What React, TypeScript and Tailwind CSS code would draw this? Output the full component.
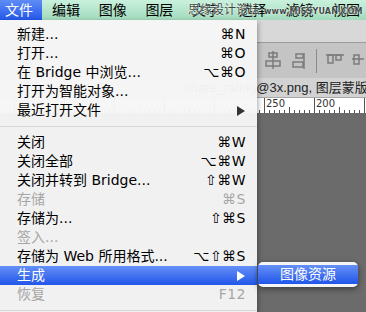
import { FC } from 'react';
import clsx from 'clsx';

type Item =
  | { sep: true }
  | {
      sep?: false;
      label: string;
      shortcut?: string;
      arrow?: boolean;
      disabled?: boolean;
      active?: boolean;
    };

const items: Item[] = [
  { label: '新建...', shortcut: '⌘N' },
  { label: '打开...', shortcut: '⌘O' },
  { label: '在 Bridge 中浏览...', shortcut: '⌥⌘O' },
  { label: '打开为智能对象...' },
  { label: '最近打开文件', arrow: true },
  { sep: true },
  { label: '关闭', shortcut: '⌘W' },
  { label: '关闭全部', shortcut: '⌥⌘W' },
  { label: '关闭并转到 Bridge...', shortcut: '⇧⌘W' },
  { label: '存储', shortcut: '⌘S', disabled: true },
  { label: '存储为...', shortcut: '⇧⌘S' },
  { label: '签入...', disabled: true },
  { label: '存储为 Web 所用格式...', shortcut: '⌥⇧⌘S' },
  { label: '生成', arrow: true, active: true },
  { label: '恢复', shortcut: 'F12', disabled: true },
  { sep: true },
];

const menuBar = ['编辑', '图像', '图层', '文字', '选择', '滤镜', '视图'];

const Arrow: FC<{ className?: string }> = ({ className }) => (
  <svg width="8" height="10" viewBox="0 0 8 10" className={className}>
    <path d="M0 0 L8 5 L0 10 Z" fill="currentColor" />
  </svg>
);

const Ruler: FC = () => {
  const ticks = [];
  for (let x = 4; x <= 366; x += 5) {
    const off = (x - 264 + 500) % 50;
    const h = off === 0 ? 15 : off === 25 ? 6 : 3;
    ticks.push(<line key={x} x1={x + 0.5} x2={x + 0.5} y1={15 - h} y2={15} stroke="#555" />);
  }
  return (
    <svg width="366" height="15" className="block">
      {ticks}
    </svg>
  );
};

const AlignIcons: FC = () => (
  <svg width="110" height="34" viewBox="0 0 110 34" className="block">
    <g fill="none" stroke="#7b7b7b" strokeWidth="1.5">
      <line x1="19" y1="7" x2="19" y2="25" />
      <rect x="15" y="9" width="8" height="4" />
      <rect x="12" y="17" width="14" height="5" />
      <line x1="50" y1="9" x2="50" y2="25" />
      <rect x="42" y="10" width="7" height="4" />
      <rect x="39" y="18" width="10" height="5" />
    </g>
    <line x1="62.5" y1="5" x2="62.5" y2="29" stroke="#8a8a8a" />
    <g fill="none" stroke="#7b7b7b" strokeWidth="1.5">
      <line x1="72" y1="11" x2="90" y2="11" />
      <rect x="74" y="11" width="5" height="8" />
      <rect x="82" y="11" width="5" height="5" />
      <line x1="98" y1="15" x2="110" y2="15" />
      <rect x="100" y="11" width="5" height="9" />
    </g>
  </svg>
);

export default function App() {
  return (
    <div className="relative h-[312px] w-[366px] overflow-hidden bg-[#6b6b6b] font-['DejaVu_Sans','Noto_Sans_CJK_SC',sans-serif] text-[14px] text-black">
      {/* menu bar */}
      <div className="flex h-[20px] items-center bg-[linear-gradient(#c9f1dd,#a2dabd)] leading-[20px]">
        <div className="h-full w-[42px] bg-[linear-gradient(#5f8df6,#2457ea)] pl-[5px] text-white">文件</div>
        <div className="flex gap-[18.7px] pl-[10px]">
          {menuBar.map((m) => (
            <span key={m} className="w-[28px]">
              {m}
            </span>
          ))}
        </div>
      </div>

      {/* app window behind the menu */}
      <div className="flex flex-col">
        <div className="h-[23px] border-b border-[#9c9c9c] bg-[#d8d8d8]" />
        <div className="flex h-[35px] items-center bg-[#c4c4c4] pl-[254px]">
          <AlignIcons />
        </div>
        <div className="h-[20px] overflow-hidden whitespace-nowrap border-b border-[#a8a8a8] bg-[#d2d2d2] pl-[184px] font-['Liberation_Sans','Noto_Sans_CJK_SC',sans-serif] text-[13px] leading-[20px] text-[#222]">
          share_rating@3x.png, 图层蒙版/8)
        </div>
        <div className="relative h-[15px] bg-white">
          <Ruler />
          <span className="absolute left-[266px] top-[-2px] text-[10px] text-[#333]">250</span>
          <span className="absolute left-[316px] top-[-2px] text-[10px] text-[#333]">200</span>
        </div>
      </div>

      {/* watermark */}
      <div className="pointer-events-none absolute left-[188px] top-[3px] flex items-end gap-[4px] whitespace-nowrap text-[#3a4a42] [text-shadow:0_0_2px_#fff,0_0_1px_#fff]">
        <span className="text-[12px] leading-[14px]">思缘设计论坛</span>
        <span className="text-[8px] font-bold leading-[11px] tracking-[0.2px]">www.MISSYUAN.COM</span>
      </div>

      {/* file menu */}
      <div className="absolute left-0 top-[20px] w-[257px] bg-[rgba(246,246,246,0.97)] pt-[5px] shadow-[1px_2px_5px_rgba(0,0,0,0.35)]">
        {items.map((it, i) =>
          it.sep ? (
            <div key={i} className="flex h-[13px] items-center">
              <div className="h-px w-full bg-[#d9d9d9]" />
            </div>
          ) : (
            <div
              key={i}
              className={clsx(
                'flex h-[19px] items-center justify-between pl-[17px] pr-[11px] leading-[19px]',
                it.active && 'bg-[linear-gradient(#6590f6,#2156ea)] text-white',
                it.disabled && 'text-[#a6a6a6]'
              )}
            >
              <span className="whitespace-nowrap">{it.label}</span>
              {it.shortcut && <span className="whitespace-nowrap tracking-[0.5px]">{it.shortcut}</span>}
              {it.arrow && <Arrow className={clsx('mr-[1px]', it.active ? 'text-white' : 'text-[#333]')} />}
            </div>
          )
        )}
      </div>

      {/* submenu */}
      <div className="absolute left-[258px] top-[262px] w-[100px] rounded-[5px] bg-[rgba(250,250,250,0.97)] py-[3px] shadow-[0_2px_6px_rgba(0,0,0,0.45)]">
        <div className="h-[19px] bg-[linear-gradient(#6590f6,#2156ea)] pl-[22px] leading-[19px] text-white">图像资源</div>
      </div>
    </div>
  );
}
